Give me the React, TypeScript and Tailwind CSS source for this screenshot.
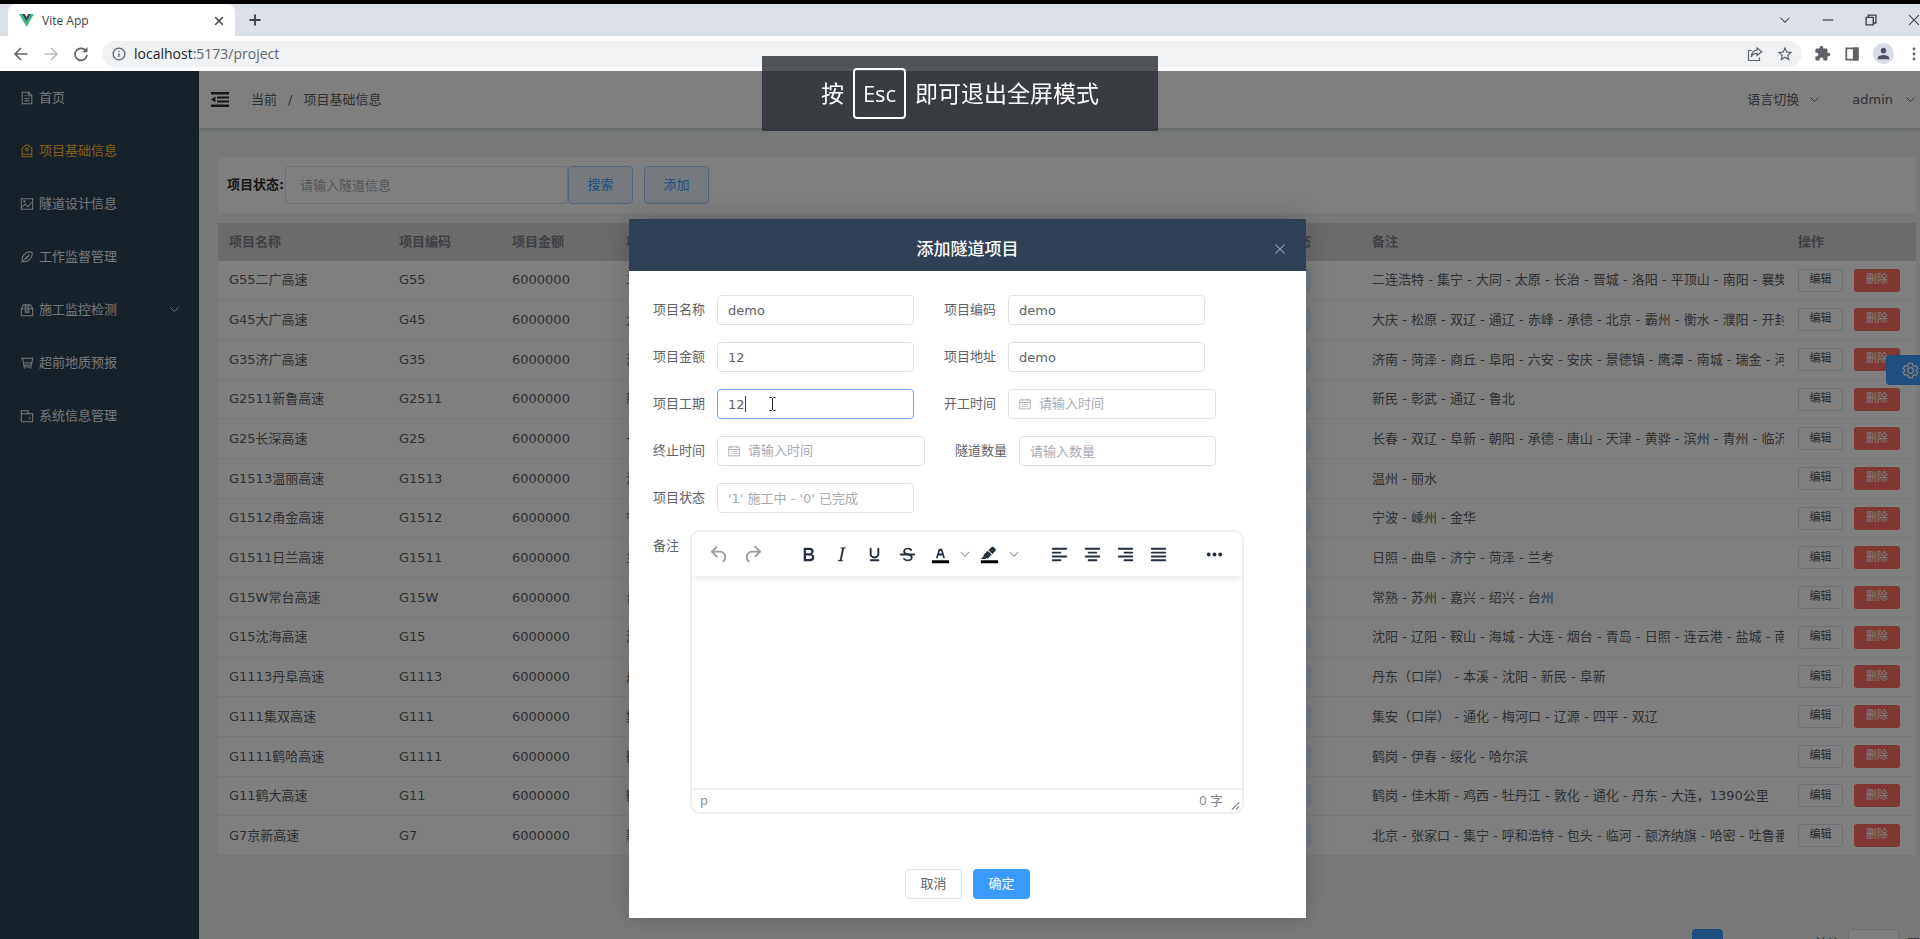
import { useState, type ReactNode } from "react";
import { MdExtension, MdPerson, MdStarBorder } from "react-icons/md";

type Project = { name: string; code: string; place: string; remark: string };

const projects: Project[] = [
  { name: "G55二广高速", code: "G55", place: "二连浩特", remark: "二连浩特 - 集宁 - 大同 - 太原 - 长治 - 晋城 - 洛阳 - 平顶山 - 南阳 - 襄樊" },
  { name: "G45大广高速", code: "G45", place: "大庆", remark: "大庆 - 松原 - 双辽 - 通辽 - 赤峰 - 承德 - 北京 - 霸州 - 衡水 - 濮阳 - 开封" },
  { name: "G35济广高速", code: "G35", place: "济南", remark: "济南 - 菏泽 - 商丘 - 阜阳 - 六安 - 安庆 - 景德镇 - 鹰潭 - 南城 - 瑞金 - 河源" },
  { name: "G2511新鲁高速", code: "G2511", place: "新民", remark: "新民 - 彰武 - 通辽 - 鲁北" },
  { name: "G25长深高速", code: "G25", place: "长春", remark: "长春 - 双辽 - 阜新 - 朝阳 - 承德 - 唐山 - 天津 - 黄骅 - 滨州 - 青州 - 临沂" },
  { name: "G1513温丽高速", code: "G1513", place: "温州", remark: "温州 - 丽水" },
  { name: "G1512甬金高速", code: "G1512", place: "宁波", remark: "宁波 - 嵊州 - 金华" },
  { name: "G1511日兰高速", code: "G1511", place: "兰考", remark: "日照 - 曲阜 - 济宁 - 菏泽 - 兰考" },
  { name: "G15W常台高速", code: "G15W", place: "台州", remark: "常熟 - 苏州 - 嘉兴 - 绍兴 - 台州" },
  { name: "G15沈海高速", code: "G15", place: "沈阳", remark: "沈阳 - 辽阳 - 鞍山 - 海城 - 大连 - 烟台 - 青岛 - 日照 - 连云港 - 盐城 - 南通" },
  { name: "G1113丹阜高速", code: "G1113", place: "丹东", remark: "丹东（口岸） - 本溪 - 沈阳 - 新民 - 阜新" },
  { name: "G111集双高速", code: "G111", place: "集安", remark: "集安（口岸） - 通化 - 梅河口 - 辽源 - 四平 - 双辽" },
  { name: "G1111鹤哈高速", code: "G1111", place: "鹤岗", remark: "鹤岗 - 伊春 - 绥化 - 哈尔滨" },
  { name: "G11鹤大高速", code: "G11", place: "鹤岗", remark: "鹤岗 - 佳木斯 - 鸡西 - 牡丹江 - 敦化 - 通化 - 丹东 - 大连，1390公里" },
  { name: "G7京新高速", code: "G7", place: "新疆", remark: "北京 - 张家口 - 集宁 - 呼和浩特 - 包头 - 临河 - 额济纳旗 - 哈密 - 吐鲁番" },
];

function Line({ className, children, width = 1.3 }: { className: string; children: ReactNode; width?: number }) {
  return (
    <svg viewBox="0 0 16 16" className={className} fill="none" stroke="currentColor" strokeWidth={width} aria-hidden="true">
      {children}
    </svg>
  );
}

function Chevron({ className }: { className: string }) {
  return (
    <Line className={className} width={1.4}>
      <path d="M2 5l6 6 6-6" />
    </Line>
  );
}

const menu: { label: string; icon: ReactNode; active?: boolean; nested?: boolean }[] = [
  { label: "首页", icon: <path d="M2.5 1.5h7.5l3.5 3.5v9.5h-11zM9.5 1.5v4h4M5 5.5h2.5M5 8.5h6M5 11.3h6" /> },
  {
    label: "项目基础信息",
    active: true,
    icon: (
      <>
        <path d="M2.5 14.5v-9.5l4-3.5h3l4 3.5v9.5zM2.5 11.8h11" />
        <circle cx="8" cy="6.2" r="1.5" />
      </>
    ),
  },
  {
    label: "隧道设计信息",
    icon: (
      <>
        <path d="M1.5 2h13v12h-13zM2 12l4-4 3 3.2 4.5-5.2" />
        <circle cx="5" cy="5" r="0.7" />
      </>
    ),
  },
  {
    label: "工作监督管理",
    icon: <path d="M1.5 14.5l3-3M4.5 13.5c-2-.5-2-1.500-2-2.500 0-4.500 3.500-8.500 9-9 2 0 2.500.5 2.500 2.500-.5 5.500-4.500 9-9.500 9zM5 11l6-6M7 7.500l1.500 2M9 5.500l1.500 2M5.500 9.500l1 1.500" />,
  },
  { label: "施工监控检测", nested: true, icon: <path d="M1.5 6.5l2.5-4.5h8l2.5 4.5v8h-13zM1.5 6.5h4.500M10 6.500h4.500M6 2v8.500h4v-8.500M8 2v8" /> },
  { label: "超前地质预报", icon: <path d="M.8 2.500h13.700l-1.500 8h-8.500l-1.700-8M4.500 10.500v2h9M5.500 14.500v-1M12 14.500v-1M5 8h8" /> },
  { label: "系统信息管理", icon: <path d="M1.500 14.500v-12.500h8v3.500M1.500 5.500h13v9h-13M11 9v2.500" /> },
];

function Sidebar() {
  return (
    <nav className="w-[199px] shrink-0 bg-[#2f4255]">
      {menu.map((item) => (
        <a
          key={item.label}
          href="#"
          className={`flex h-[53px] items-center pr-[19px] pl-5 ${item.active ? "text-[#ffbf33]" : "text-[#e9edf2]"}`}
        >
          <Line className="size-[14px]" width={1.2}>{item.icon}</Line>
          <span className="ml-[5px]">{item.label}</span>
          {item.nested && <Chevron className="ml-auto size-[11px]" />}
        </a>
      ))}
    </nav>
  );
}

function BrowserChrome() {
  return (
    <header className="shrink-0 border-t-4 border-black bg-[#dce0e8] font-['Open_Sans','Noto_Sans_CJK_SC',sans-serif] text-[#3c4043]">
      <div className="flex h-8 items-center">
        <div className="ml-2 flex h-full w-[227px] items-center rounded-t-lg bg-white pt-px pr-[10px] pl-[11px]">
          <svg viewBox="0 0 16 14" className="h-[13px] w-[15px]" aria-hidden="true">
            <path d="M0 0h3.2L8 8.3 12.8 0H16L8 13.9z" fill="#41b883" />
            <path d="M3.2 0h3L8 3.1 9.8 0h3L8 8.3z" fill="#35495e" />
          </svg>
          <span className="ml-2 text-xs">Vite App</span>
          <button aria-label="关闭标签页" className="ml-auto">
            <Line className="size-3" width={2}><path d="M3 3l10 10M13 3L3 13" /></Line>
          </button>
        </div>
        <button aria-label="新标签页" className="ml-3">
          <Line className="size-4" width={1.8}><path d="M8 2.500v11M2.500 8h11" /></Line>
        </button>
        <div className="ml-auto flex items-center gap-[31px]">
          <button aria-label="搜索标签页"><Chevron className="size-3" /></button>
          <button aria-label="最小化"><Line className="size-3" width={1.6}><path d="M1 8h14" /></Line></button>
          <button aria-label="还原"><Line className="size-3" width={1.8}><path d="M1.500 4.500h9.500v10H1.500zM4.500 4V1.500h10v10.500H11.500" /></Line></button>
          <button aria-label="关闭"><Line className="size-3" width={1.4}><path d="M1.500 1.500l13 13M14.500 1.500l-13 13" /></Line></button>
        </div>
      </div>
      <div className="flex h-[35px] items-center bg-white pl-[13px] text-[#5f6368]">
        <button aria-label="后退"><Line className="size-4" width={1.6}><path d="M14.500 8H2.500M8 2L2 8l6 6" /></Line></button>
        <button aria-label="前进" className="ml-[14px] text-[#babcbe]"><Line className="size-4" width={1.6}><path d="M1.500 8h12M8 2l6 6-6 6" /></Line></button>
        <button aria-label="刷新" className="ml-[14px]">
          <Line className="size-4" width={1.7}>
            <path d="M13.300 5.500A6 6 0 1 0 14 8.800" />
            <path d="M14.500 1v5.300H9.200z" fill="currentColor" stroke="none" />
          </Line>
        </button>
        <div className="ml-[13px] flex h-[26px] flex-1 items-center rounded-full bg-[#f0f2f4] pr-2 pl-[10px]">
          <Line className="size-[14px]" width={1.5}>
            <circle cx="8" cy="8" r="6.700" />
            <path d="M8 7v4.500M8 4.300v1.500" />
          </Line>
          <span className="ml-2 text-[14px]"><span className="text-[#202124]">localhost</span>:5173/project</span>
          <button aria-label="分享" className="ml-auto">
            <Line className="size-4" width={1.2}>
              <path d="M4.500 4.500H1.500v10h11v-3M10 2l4.800 3.700L10 9.500V7.300C7 7.300 5.300 8.500 4.300 11c.2-4 2.200-6.500 5.700-6.800z" />
            </Line>
          </button>
          <button aria-label="收藏" className="ml-[13px]"><MdStarBorder className="size-[18px]" /></button>
        </div>
        <div className="ml-3 flex items-center gap-[14px]">
          <MdExtension className="size-[17px]" />
          <Line className="size-[14px]" width={2}><path d="M1.500 1.500h13v13h-13z" /><path d="M10 1.500h4.500v13H10z" fill="currentColor" /></Line>
          <span className="flex size-[21px] items-center justify-center rounded-full bg-[#d8dce6] text-[#4b5163]"><MdPerson className="size-[17px]" /></span>
          <svg viewBox="0 0 12 16" className="h-4 w-3" fill="currentColor" aria-hidden="true">
            <circle cx="6" cy="3" r="1.400" /><circle cx="6" cy="8" r="1.400" /><circle cx="6" cy="13" r="1.400" />
          </svg>
        </div>
      </div>
    </header>
  );
}

function TopBar() {
  return (
    <div className="relative flex h-[57px] items-center bg-white pl-3 text-[#606266] shadow-[0_1px_4px_rgba(0,21,41,0.25)]">
      <button aria-label="折叠菜单" className="text-[#303133]">
        <svg viewBox="0 0 18 15" className="h-[15px] w-[18px]" fill="currentColor" aria-hidden="true">
          <path d="M0 0h18v2.500H0zM6 4.500h12v2H6zM6 8.500h12v2H6zM0 12.500h18V15H0zM0 7.500l4.500-3v6z" />
        </svg>
      </button>
      <div className="ml-[22px] flex items-center">
        <span>当前</span>
        <span className="mx-[11px]">/</span>
        <span>项目基础信息</span>
      </div>
      <button className="ml-auto flex items-center">
        语言切换<Chevron className="ml-[10px] size-[11px]" />
      </button>
      <button className="ml-8 flex items-center pr-1">
        admin<Chevron className="ml-3 size-[11px]" />
      </button>
    </div>
  );
}

function SearchCard() {
  return (
    <form className="flex h-14 items-center bg-white pl-[9px]">
      <label htmlFor="search" className="w-[58px] font-bold whitespace-nowrap text-[#303133]">项目状态:</label>
      <input
        id="search"
        placeholder="请输入隧道信息"
        className="h-[38px] w-[283px] rounded border border-[#dcdfe6] bg-white px-[14px] outline-none placeholder:text-[#a8abb2]"
      />
      <button type="button" className="h-[38px] w-[65px] rounded border border-[#a0cfff] bg-[#ecf5ff] text-[#409eff]">搜索</button>
      <button type="button" className="ml-[11px] h-[38px] w-[65px] rounded border border-[#a0cfff] bg-[#ecf5ff] text-[#409eff]">添加</button>
    </form>
  );
}

function ProjectTable() {
  return (
    <table className="mt-[10px] h-[633px] w-full table-fixed border-collapse bg-white text-left text-[#606266]">
      <colgroup>
        <col className="w-[170px]" />
        <col className="w-[113px]" />
        <col className="w-[114px]" />
        <col />
        <col className="w-[113px]" />
        <col className="w-[426px]" />
        <col className="w-[129px]" />
      </colgroup>
      <thead>
        <tr className="h-[38px] bg-[#d6d6d6] text-[#7e8187]">
          {["项目名称", "项目编码", "项目金额", "项目地址", "项目状态", "备注", "操作"].map((h) => (
            <th key={h} className="px-[11px] font-bold">{h}</th>
          ))}
        </tr>
      </thead>
      <tbody>
        {projects.map((p) => (
          <tr key={p.name} className="border-b border-[#ebeef5]">
            <td className="px-[11px]">{p.name}</td>
            <td className="px-[11px]">{p.code}</td>
            <td className="px-[11px]">6000000</td>
            <td className="px-[11px]">{p.place}</td>
            <td className="px-[11px]">
              <span className="flex h-[23px] w-[52px] items-center justify-center rounded border border-[#d9ecff] bg-[#ecf5ff] text-[11px] text-[#409eff]">施工中</span>
            </td>
            <td className="pr-[3px] pl-[11px]">
              <div className="overflow-hidden whitespace-nowrap">{p.remark}</div>
            </td>
            <td className="pl-[11px]">
              <div className="flex gap-[11px] text-[11px]">
                <button className="h-[23px] w-[45px] rounded-[3px] border border-[#dcdfe6] bg-white text-[#505256]">编辑</button>
                <button className="h-[23px] w-[46px] rounded-[3px] bg-[#ff6e64] text-white">删除</button>
              </div>
            </td>
          </tr>
        ))}
      </tbody>
    </table>
  );
}

function Pagination() {
  return (
    <div className="mt-[73px] -mr-1 flex h-[30px] items-center justify-end gap-[7px]">
      <button aria-label="上一页" className="h-full w-[30px] rounded-sm bg-[#f4f4f5]" />
      <button className="h-full w-[31px] rounded-sm bg-[#409eff] text-white">1</button>
      <button aria-label="下一页" className="h-full w-[30px] rounded-sm" />
      <label className="ml-[47px] flex h-full items-center gap-2 text-[#606266]">
        前往
        <input aria-label="页码" defaultValue="1" className="h-full w-[51px] rounded border border-[#dcdfe6] bg-white text-center outline-none" />
        页
      </label>
    </div>
  );
}

function FormItem({ id, label, children }: { id: string; label: string; children: ReactNode }) {
  return (
    <div className="flex h-[30px] items-center">
      <label htmlFor={id} className="w-16 text-[#606266]">{label}</label>
      {children}
    </div>
  );
}

function TextField({ id, label, value, placeholder, focused }: { id: string; label: string; value?: string; placeholder?: string; focused?: boolean }) {
  return (
    <FormItem id={id} label={label}>
      <div className="relative">
        <input
          id={id}
          defaultValue={value}
          placeholder={placeholder}
          className={`block h-[30px] w-[197px] rounded border bg-white px-[10px] text-[#606266] outline-none placeholder:text-[#a8abb2] ${focused ? "border-[#66a9f2]" : "border-[#dfe2e8]"}`}
        />
        {focused && <span className="absolute top-[7px] left-7 h-4 w-px bg-[#404246]" />}
        {focused && (
          <svg viewBox="0 0 7 14" className="absolute top-2 left-[52px] h-[14px] w-[7px]" fill="none" stroke="#222" aria-hidden="true">
            <path d="M.5 .5h2l1 1 1-1h2M3.500 1.500v11M.5 13.500h2l1-1 1 1h2" />
          </svg>
        )}
      </div>
    </FormItem>
  );
}

function DateField({ id, label }: { id: string; label: string }) {
  return (
    <FormItem id={id} label={label}>
      <div className="flex h-[30px] w-[208px] items-center rounded border border-[#dfe2e8] px-[10px]">
        <Line className="size-3 shrink-0 text-[#a8abb2]" width={1.2}>
          <path d="M1 2.500h14v12H1zM1 6h14M4.500 1v3M11.500 1v3M4 8.800h2M7 8.800h2M10 8.800h2M4 11.500h2M7 11.500h2M10 11.500h2" />
        </Line>
        <input id={id} placeholder="请输入时间" className="ml-2 w-full min-w-0 outline-none placeholder:text-[#a8abb2]" />
      </div>
    </FormItem>
  );
}

function Tool({ label, children, muted }: { label: string; children: ReactNode; muted?: boolean }) {
  return (
    <button type="button" aria-label={label} className={`flex h-7 w-[33px] items-center justify-center ${muted ? "text-[#9a9fa7]" : "text-[#222f3e]"}`}>
      <svg viewBox="0 0 24 24" className="size-[23px]" fill="currentColor" aria-hidden="true">{children}</svg>
    </button>
  );
}

function Editor() {
  return (
    <div className="flex h-[284px] w-[554px] flex-col overflow-hidden rounded-[10px] border-2 border-[#eeeeee] bg-white">
      <div className="relative flex h-11 shrink-0 items-center bg-white pl-[11px] shadow-[0_3px_6px_-1px_rgba(34,47,62,0.12)]">
        <Tool label="撤销" muted>
          <path d="M6.400 8H12c3.700 0 6.200 2 6.800 5.100.6 2.700-.4 5.600-2.300 6.800a1 1 0 0 1-1-1.800c1.100-.6 1.800-2.700 1.400-4.600-.5-2.100-2.100-3.500-4.900-3.500H6.400l3.300 3.300a1 1 0 1 1-1.400 1.400l-5-5a1 1 0 0 1 0-1.400l5-5a1 1 0 0 1 1.400 1.400L6.400 8Z" />
        </Tool>
        <Tool label="重做" muted>
          <path d="M17.600 10H12c-2.800 0-4.400 1.400-4.900 3.500-.4 2 .3 4 1.400 4.600a1 1 0 1 1-1 1.800c-2-1.200-2.900-4.100-2.300-6.800.6-3 3-5.100 6.800-5.100h5.600l-3.300-3.300a1 1 0 1 1 1.400-1.400l5 5a1 1 0 0 1 0 1.400l-5 5a1 1 0 0 1-1.400-1.400l3.300-3.300Z" />
        </Tool>
        <div className="ml-[23px] flex">
          <Tool label="粗体">
            <path d="M7.800 19c-.3 0-.5 0-.6-.2l-.2-.5V5.700c0-.2 0-.4.2-.5l.6-.2h5c1.500 0 2.700.3 3.500 1 .7.6 1.100 1.400 1.100 2.500a3 3 0 0 1-.6 1.900c-.4.6-1 1-1.600 1.200.4.1.9.3 1.300.6s.8.7 1 1.200c.4.4.5 1 .5 1.600 0 1.300-.4 2.300-1.300 3-.8.7-2.100 1-3.800 1H7.800Zm5-8.300c.6 0 1.200-.1 1.600-.5.4-.3.6-.7.6-1.300 0-1.100-.8-1.700-2.300-1.700H9.300v3.500h3.400Zm.5 6c.7 0 1.300-.1 1.700-.4.4-.4.6-.9.6-1.500s-.2-1-.7-1.400c-.4-.3-1-.4-2-.4H9.400v3.800h4Z" />
          </Tool>
          <Tool label="斜体">
            <path d="m16.700 4.700-.1.9h-.3c-.6 0-1 0-1.400.3-.3.3-.4.6-.5 1.100l-2.100 9.800v.6c0 .5.4.8 1.400.8h.2l-.2.8H8l.2-.8h.2c1.100 0 1.800-.5 2-1.500l2-9.800.1-.5c0-.6-.4-.8-1.400-.8h-.3l.2-.9h5.800Z" />
          </Tool>
          <Tool label="下划线">
            <path d="M16 5c.6 0 1 .4 1 1v5.500a4 4 0 0 1-.4 1.800l-1 1.400a5.300 5.300 0 0 1-5.500 1 5 5 0 0 1-1.600-1c-.5-.4-.8-.9-1.100-1.400a4 4 0 0 1-.4-1.800V6c0-.6.4-1 1-1s1 .4 1 1v5.500c0 .3 0 .6.2 1l.6.7a3.300 3.300 0 0 0 2.200.8 3.400 3.400 0 0 0 2.200-.8c.3-.2.4-.5.6-.8l.2-.9V6c0-.6.4-1 1-1ZM8 17h8c.6 0 1 .4 1 1s-.4 1-1 1H8a1 1 0 0 1 0-2Z" />
          </Tool>
          <Tool label="删除线">
            <path d="M15.600 8.500c-.5-.7-1-1.100-1.300-1.300-.6-.4-1.300-.6-2-.6-2.700 0-2.800 1.700-2.800 2.100 0 1.600 1.800 2 3.200 2.300 4.400.9 4.600 2.800 4.600 3.900 0 1.400-.7 4.100-5 4.100A6.200 6.200 0 0 1 7 16.400l1.500-1.100c.4.6 1.600 2 3.700 2 1.600 0 2.500-.4 3-1.200.4-.8.3-2-.8-2.600-.7-.4-1.600-.7-2.900-1-1-.2-3.900-.8-3.900-3.600C7.600 6 10.300 5 12.400 5c2.900 0 4.200 1.600 4.700 2.400l-1.500 1.100Z" />
            <path d="M5 11h14a1 1 0 0 1 0 2H5a1 1 0 0 1 0-2Z" />
          </Tool>
        </div>
        <Tool label="文字颜色">
          <path d="M3 18h18v3H3z" fill="#000" />
          <path d="M8.700 16h-.8a.5.5 0 0 1-.5-.6l2.700-9c.1-.3.3-.4.5-.4h2.800c.2 0 .4.1.5.4l2.700 9a.5.5 0 0 1-.5.6h-.8a.5.5 0 0 1-.4-.4l-.7-2.200c0-.3-.3-.4-.5-.4h-3.400c-.2 0-.4.1-.5.4l-.7 2.200c0 .3-.2.4-.4.4Zm2.600-7.600-.6 2a.5.5 0 0 0 .5.600h1.600a.5.5 0 0 0 .5-.6l-.6-2c0-.3-.3-.4-.5-.4h-.4c-.2 0-.4.1-.5.400Z" />
        </Tool>
        <button type="button" aria-label="选择文字颜色" className="flex w-4 justify-center text-[#8c929b]"><Chevron className="size-3" /></button>
        <Tool label="背景颜色">
          <path d="M3 18h18v3H3z" fill="#000" />
          <path d="M7.700 16.700H3l3.300-3.300-.7-.8L10.200 8l4 4.100-4 4.200c-.2.2-.6.2-.8 0l-.6-.7-1.100 1.100zm5-7.500L11 7.400l3-2.900a2 2 0 0 1 2.600 0L18 6c.7.7.7 2 0 2.700l-2.900 2.900-1.800-1.800-.5-.6" />
        </Tool>
        <button type="button" aria-label="选择背景颜色" className="flex w-[15px] justify-center text-[#8c929b]"><Chevron className="size-3" /></button>
        <div className="ml-[22px] flex">
          <Tool label="左对齐">
            <path d="M5 5h14a1 1 0 0 1 0 2H5a1 1 0 1 1 0-2Zm0 4h8a1 1 0 0 1 0 2H5a1 1 0 1 1 0-2Zm0 8h8a1 1 0 0 1 0 2H5a1 1 0 0 1 0-2Zm0-4h14a1 1 0 0 1 0 2H5a1 1 0 0 1 0-2Z" />
          </Tool>
          <Tool label="居中">
            <path d="M5 5h14a1 1 0 0 1 0 2H5a1 1 0 1 1 0-2Zm3 4h8a1 1 0 0 1 0 2H8a1 1 0 1 1 0-2Zm0 8h8a1 1 0 0 1 0 2H8a1 1 0 0 1 0-2Zm-3-4h14a1 1 0 0 1 0 2H5a1 1 0 0 1 0-2Z" />
          </Tool>
          <Tool label="右对齐">
            <path d="M5 5h14a1 1 0 0 1 0 2H5a1 1 0 1 1 0-2Zm6 4h8a1 1 0 0 1 0 2h-8a1 1 0 0 1 0-2Zm0 8h8a1 1 0 0 1 0 2h-8a1 1 0 0 1 0-2Zm-6-4h14a1 1 0 0 1 0 2H5a1 1 0 0 1 0-2Z" />
          </Tool>
          <Tool label="两端对齐">
            <path d="M5 5h14a1 1 0 0 1 0 2H5a1 1 0 1 1 0-2Zm0 4h14a1 1 0 0 1 0 2H5a1 1 0 1 1 0-2Zm0 4h14a1 1 0 0 1 0 2H5a1 1 0 0 1 0-2Zm0 4h14a1 1 0 0 1 0 2H5a1 1 0 0 1 0-2Z" />
          </Tool>
        </div>
        <div className="ml-[23px]">
          <Tool label="更多">
            <circle cx="6" cy="12" r="2" /><circle cx="12" cy="12" r="2" /><circle cx="18" cy="12" r="2" />
          </Tool>
        </div>
      </div>
      <textarea id="remark" aria-label="备注" className="min-h-0 w-full flex-1 resize-none p-4 outline-none" />
      <div className="flex h-6 shrink-0 items-center border-t-2 border-[#f0f0f0] pr-[2px] pl-2 font-['Open_Sans','Noto_Sans_CJK_SC',sans-serif] text-[13px] text-[#83888f]">
        <span>p</span>
        <span className="ml-auto">0 字</span>
        <svg viewBox="0 0 10 10" className="mt-2 ml-2 size-[9px]" stroke="currentColor" strokeWidth="1.400" aria-hidden="true">
          <path d="M1 9.500L9 1.500M5.500 9.500L9 6" />
        </svg>
      </div>
    </div>
  );
}

function ProjectDialog({ onClose }: { onClose: () => void }) {
  return (
    <div className="absolute inset-0 flex items-start justify-center bg-black/50 pt-[148px] pl-[15px]">
      <section role="dialog" aria-labelledby="dialog-title" className="w-[677px] bg-white pb-[19px] shadow-[0_0_24px_rgba(0,0,0,0.2)]">
        <div className="relative flex h-[52px] items-center justify-center bg-[#304156] pt-[10px] text-white">
          <h2 id="dialog-title" className="text-[17px] font-medium">添加隧道项目</h2>
          <button aria-label="关闭对话框" onClick={onClose} className="absolute top-6 right-5 text-[#a6aebb]">
            <Line className="size-3" width={1.4}><path d="M2 2l12 12M14 2L2 14" /></Line>
          </button>
        </div>
        <form className="flex flex-wrap gap-x-[30px] gap-y-[17px] px-6 pt-6">
          <TextField id="name" label="项目名称" value="demo" />
          <TextField id="code" label="项目编码" value="demo" />
          <TextField id="amount" label="项目金额" value="12" />
          <TextField id="address" label="项目地址" value="demo" />
          <TextField id="duration" label="项目工期" value="12" focused />
          <DateField id="start" label="开工时间" />
          <DateField id="end" label="终止时间" />
          <TextField id="count" label="隧道数量" placeholder="请输入数量" />
          <TextField id="status" label="项目状态" placeholder="'1' 施工中 - '0' 已完成" />
          <div className="flex items-start">
            <label htmlFor="remark" className="w-[37px] leading-8 text-[#606266]">备注</label>
            <Editor />
          </div>
        </form>
        <div className="mt-[55px] flex justify-center gap-[11px]">
          <button onClick={onClose} className="h-[30px] w-[57px] rounded border border-[#dcdfe6] bg-white text-[#606266]">取消</button>
          <button onClick={onClose} className="h-[30px] w-[57px] rounded bg-[#3a9bff] text-white">确定</button>
        </div>
      </section>
    </div>
  );
}

function FullscreenHint() {
  return (
    <div className="fixed top-14 left-1/2 flex h-[75px] w-[396px] -translate-x-1/2 items-center justify-center gap-[9px] bg-[#282c31]/80 font-['Open_Sans','Noto_Sans_CJK_SC',sans-serif] text-[23px] whitespace-nowrap text-white">
      <span>按</span>
      <kbd className="flex h-[51px] w-[53px] items-center justify-center rounded border-2 border-white font-['Open_Sans',sans-serif] text-[22px]">Esc</kbd>
      <span>即可退出全屏模式</span>
    </div>
  );
}

export default function App() {
  const [open, setOpen] = useState(true);
  return (
    <div className="flex h-screen flex-col overflow-hidden font-['DejaVu_Sans','Noto_Sans_CJK_SC',sans-serif] text-[13px]">
      <BrowserChrome />
      <div className="relative flex min-h-0 flex-1 overflow-hidden">
        <Sidebar />
        <main className="min-w-0 flex-1 bg-[#f0f4f2]">
          <TopBar />
          <div className="pt-[29px] pr-1 pl-[19px]">
            <SearchCard />
            <ProjectTable />
            <Pagination />
          </div>
        </main>
        <button aria-label="设置" className="absolute top-[284px] right-0 flex h-[30px] w-[34px] items-center justify-end rounded-l bg-[#409eff] pr-px text-white">
          <svg viewBox="0 0 24 24" className="size-[17px]" fill="none" stroke="currentColor" strokeWidth="1.800" aria-hidden="true">
            <path d="M9.500 2h5l.8 3 1.700 1 3-.8 2.300 4-2.100 2v1.600l2.100 2-2.300 4-3-.8-1.700 1-.8 3h-5l-.8-3-1.700-1-3 .8-2.300-4 2.100-2v-1.600l-2.100-2 2.300-4 3 .8 1.700-1z" />
            <circle cx="12" cy="12" r="4" />
          </svg>
        </button>
        {open && <ProjectDialog onClose={() => setOpen(false)} />}
      </div>
      <FullscreenHint />
    </div>
  );
}
